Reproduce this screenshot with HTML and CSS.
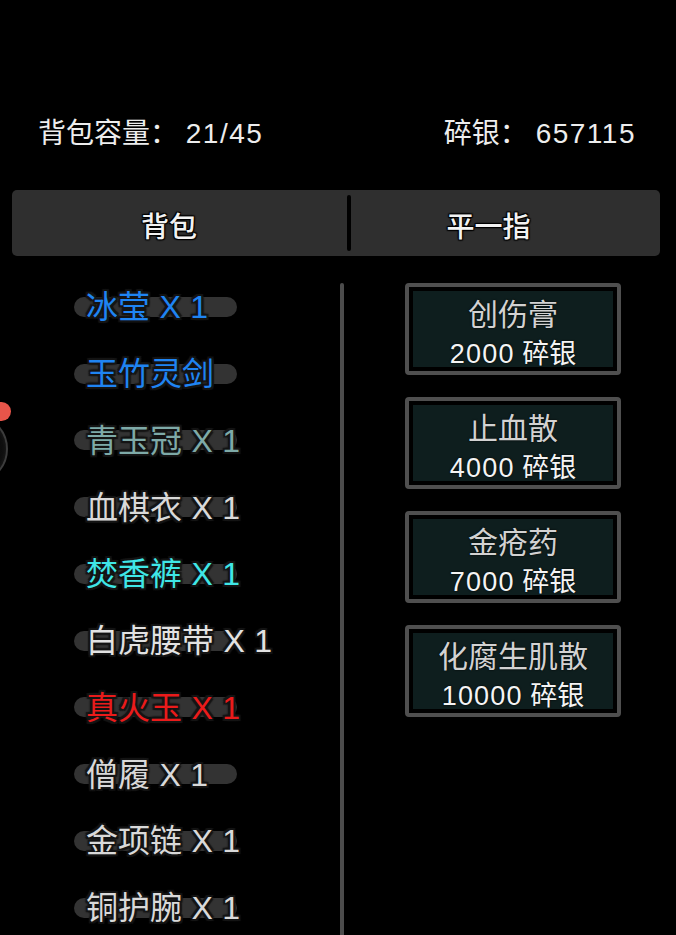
FILE: index.html
```html
<!DOCTYPE html>
<html lang="zh">
<head>
<meta charset="utf-8">
<link rel="stylesheet" href="styles.css">
</head>
<body>
<div class="screen">
  <div class="float-btn"><span class="badge"></span></div>
  <div class="header">
    <div class="stat">背包容量： <span class="num">21/45</span></div>
    <div class="stat">碎银： <span class="num">657115</span></div>
  </div>
  <div class="tabs">
    <div class="tab tab-left">背包</div>
    <div class="tab-sep"></div>
    <div class="tab tab-right">平一指</div>
  </div>
  <div class="content">
    <div class="bag">
      <div class="row"><span class="pill"></span><span class="name c-blue">冰莹 X 1</span></div>
      <div class="row"><span class="pill"></span><span class="name c-blue">玉竹灵剑</span></div>
      <div class="row"><span class="pill"></span><span class="name c-teal">青玉冠 X 1</span></div>
      <div class="row"><span class="pill"></span><span class="name c-grey">血棋衣 X 1</span></div>
      <div class="row"><span class="pill"></span><span class="name c-cyan">焚香裤 X 1</span></div>
      <div class="row"><span class="pill"></span><span class="name c-white">白虎腰带 X 1</span></div>
      <div class="row"><span class="pill"></span><span class="name c-red">真火玉 X 1</span></div>
      <div class="row"><span class="pill"></span><span class="name c-grey">僧履 X 1</span></div>
      <div class="row"><span class="pill"></span><span class="name c-grey">金项链 X 1</span></div>
      <div class="row"><span class="pill"></span><span class="name c-grey">铜护腕 X 1</span></div>
    </div>
    <div class="vline"></div>
    <div class="shop">
      <div class="card"><div class="card-in"><div class="title">创伤膏</div><div class="price"><span class="num">2000</span> 碎银</div></div></div>
      <div class="card"><div class="card-in"><div class="title">止血散</div><div class="price"><span class="num">4000</span> 碎银</div></div></div>
      <div class="card"><div class="card-in"><div class="title">金疮药</div><div class="price"><span class="num">7000</span> 碎银</div></div></div>
      <div class="card"><div class="card-in"><div class="title">化腐生肌散</div><div class="price"><span class="num">10000</span> 碎银</div></div></div>
    </div>
  </div>
</div>
</body>
</html>
```
FILE: styles.css
```css
html, body {
  margin: 0;
  padding: 0;
  background: #000;
}
body {
  font-family: "Liberation Sans", "Noto Sans CJK SC", sans-serif;
  color: #eee;
}
.screen {
  position: relative;
  width: 676px;
  height: 935px;
  overflow: hidden;
  background: #000;
}
.num {
  letter-spacing: 1.2px;
}
.header .num {
  letter-spacing: 1.5px;
}
.float-btn {
  position: absolute;
  left: -62px;
  top: 414px;
  width: 66px;
  height: 66px;
  border-radius: 50%;
  border: 2px solid #3c3c3c;
  background: radial-gradient(circle at 60% 50%, #151515 0%, #0a0a0a 70%);
  box-shadow: inset 0 0 4px #222;
}
.badge {
  position: absolute;
  left: 52px;
  top: -14px;
  width: 19px;
  height: 19px;
  border-radius: 50%;
  background: #e8554a;
}
.header {
  display: flex;
  justify-content: space-between;
  padding: 114px 40px 0 38px;
  height: 40px;
  line-height: 40px;
  font-size: 28px;
  color: #ededed;
}
.tabs {
  margin: 36px 16px 0 12px;
  height: 66px;
  background: #2f2f2f;
  border-radius: 5px;
  display: flex;
  align-items: center;
}
.tab {
  font-size: 28px;
  font-weight: 500;
  color: #f2f2f2;
  text-align: center;
  line-height: 57px;
  padding-top: 9px;
  height: 57px;
  text-shadow: 0 0 2px #000, 1px 1px 1px #000, -1px -1px 1px #000, 1px -1px 1px #000, -1px 1px 1px #000;
}
.tab-left {
  width: 314px;
  padding-right: 21px;
}
.tab-right {
  flex: 1;
  padding-right: 34px;
}
.tab-sep {
  width: 4px;
  height: 56px;
  background: #000;
  border-radius: 2px;
}
.content {
  display: flex;
}
.bag {
  width: 340px;
  padding-top: 18px;
}
.row {
  display: grid;
  grid-template-columns: 163px;
  align-items: center;
  height: 66.75px;
  margin-left: 74px;
}
.pill, .name {
  grid-area: 1 / 1;
}
.pill {
  height: 20px;
  border-radius: 10px;
  background: #333;
  margin-top: -1px;
}
.name {
  padding-left: 12px;
  font-size: 32px;
  line-height: 40px;
  margin-top: 0;
  word-spacing: 0.5px;
  white-space: nowrap;
  text-shadow: 2px 0 1px #151515, -2px 0 1px #151515, 0 2px 1px #151515, 0 -2px 1px #151515,
    2px 2px 1px #151515, -2px -2px 1px #151515, 2px -2px 1px #151515, -2px 2px 1px #151515;
}
.c-blue { color: #1f84f2; }
.c-teal { color: #7eaaa8; }
.c-grey { color: #d9d9d9; }
.c-cyan { color: #3fe6e6; }
.c-white { color: #e2e2e2; }
.c-red { color: #ea1b1b; }
.vline {
  width: 4px;
  margin-top: 27px;
  height: 700px;
  background: #4c4c4c;
  border-radius: 2px 2px 0 0;
}
.shop {
  padding-top: 27px;
  padding-left: 61px;
  display: flex;
  flex-direction: column;
  gap: 22px;
}
.card {
  width: 208px;
  height: 84px;
  border: 4px solid #4f4f4f;
  border-radius: 4px;
  background: #000;
  display: flex;
}
.card-in {
  flex: 1;
  margin: 4px;
  background: #0e1e1e;
  text-align: center;
  padding-top: 5px;
}
.title {
  font-size: 30px;
  line-height: 38px;
  color: #d2d2d2;
  text-shadow: 0 0 2px #000;
}
.price {
  font-size: 27px;
  line-height: 38px;
  margin-top: 1px;
  color: #f4f4f4;
  text-shadow: 0 0 2px #000;
}
```
